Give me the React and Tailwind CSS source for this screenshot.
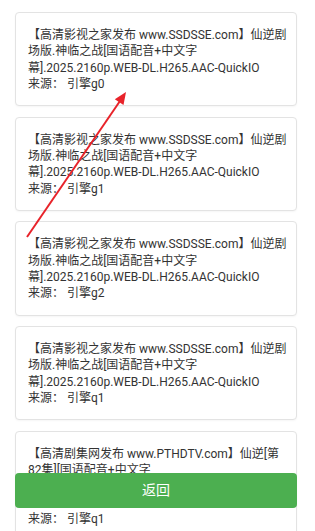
import React from 'react';

const items = [
  { title: '【高清影视之家发布 www.SSDSSE.com】仙逆剧场版.神临之战[国语配音+中文字幕].2025.2160p.WEB-DL.H265.AAC-QuickIO', source: 'g0' },
  { title: '【高清影视之家发布 www.SSDSSE.com】仙逆剧场版.神临之战[国语配音+中文字幕].2025.2160p.WEB-DL.H265.AAC-QuickIO', source: 'g1' },
  { title: '【高清影视之家发布 www.SSDSSE.com】仙逆剧场版.神临之战[国语配音+中文字幕].2025.2160p.WEB-DL.H265.AAC-QuickIO', source: 'g2' },
  { title: '【高清影视之家发布 www.SSDSSE.com】仙逆剧场版.神临之战[国语配音+中文字幕].2025.2160p.WEB-DL.H265.AAC-QuickIO', source: 'q1' },
  { title: '【高清剧集网发布 www.PTHDTV.com】仙逆[第82集][国语配音+中文字幕].Renegade.Immortal.S01E82.2023.2160p.WEB-DL.H265.AAC-ColorTV', source: 'q1' },
];

export default function App() {
  return (
    <div
      className="relative w-[315px] h-[531px] overflow-hidden bg-white"
      style={{ fontFamily: 'Roboto, "Noto Sans CJK SC", sans-serif' }}
    >
      {/* result list */}
      <div className="flex flex-col gap-[10.5px] pt-[12px] pl-[15px] w-[297px]">
        {items.map((item, i) => (
          <div
            key={i}
            className="border border-[#e3e3e3] rounded-[4px] bg-white pt-[14px] pb-[13px] pl-[12px] pr-[7px] shadow-[0_1px_2px_rgba(0,0,0,0.04)] text-[12px] leading-[16.3px] text-[#333]"
          >
            <div>{item.title}</div>
            <div>来源：&nbsp;引擎{item.source}</div>
          </div>
        ))}
      </div>

      {/* back button */}
      <button
        type="button"
        className="absolute left-[15px] top-[473px] w-[282px] h-[35px] rounded-[4px] bg-[#4caf50] text-white text-[14px]"
      >
        返回
      </button>

      {/* red annotation arrow */}
      <svg className="absolute left-0 top-0 pointer-events-none" width="315" height="531">
        <line x1="27" y1="237" x2="120" y2="101" stroke="#e8232a" strokeWidth="2" />
        <polygon points="126,92 123.5,105 114.8,99.2" fill="#e8232a" />
      </svg>
    </div>
  );
}
